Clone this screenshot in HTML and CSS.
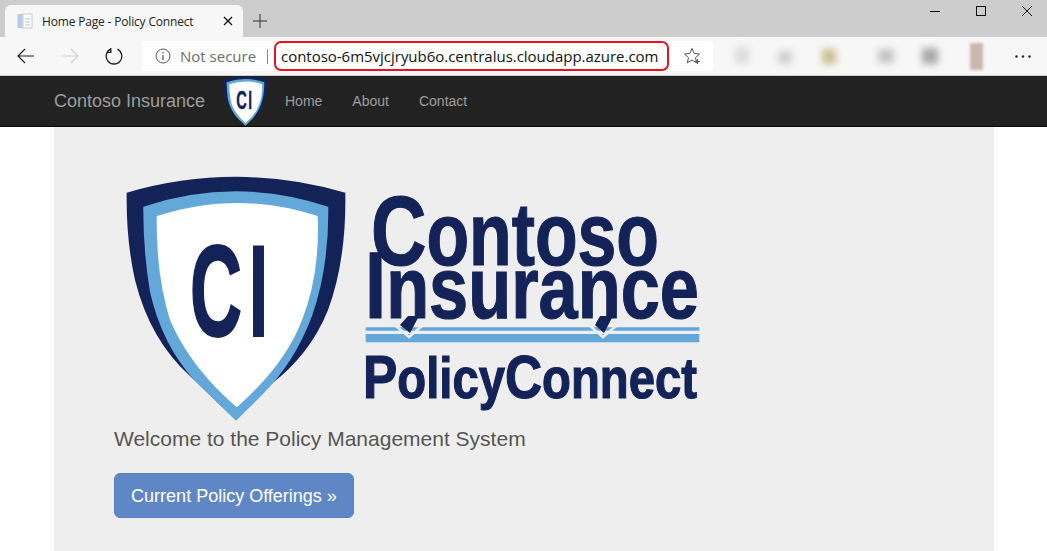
FILE: index.html
```html
<!DOCTYPE html>
<html lang="en">
<head>
<meta charset="utf-8">
<title>Home Page - Policy Connect</title>
<link rel="stylesheet" href="styles.css">
</head>
<body>
<header class="chrome">
  <div class="tabstrip">
    <div class="tab">
      <svg class="favicon" viewBox="0 0 16 16" width="16" height="16"><rect x="0.5" y="1" width="5" height="14" fill="#b5cbe8"/><rect x="6" y="1" width="9" height="14" fill="#fff" stroke="#c9c9c9"/><path d="M8 6h5M8 9h5M8 12h5" stroke="#bdbdbd"/></svg>
      <span class="tab-title">Home Page - Policy Connect</span>
      <svg class="tab-close" viewBox="0 0 10 10" width="10" height="10"><path d="M1 1l8 8M9 1l-8 8" stroke="#111" stroke-width="1.3"/></svg>
    </div>
    <svg class="new-tab" viewBox="0 0 14 14" width="14" height="14"><path d="M7 0v14M0 7h14" stroke="#333" stroke-width="1"/></svg>
    <div class="win-controls">
      <svg viewBox="0 0 10 10" width="10" height="10"><path d="M0 5.500h10" stroke="#111" stroke-width="1"/></svg>
      <svg viewBox="0 0 10 10" width="10" height="10"><rect x="0.5" y="0.5" width="9" height="9" fill="none" stroke="#111"/></svg>
      <svg viewBox="0 0 10 10" width="10" height="10"><path d="M0 0l10 10M10 0l-10 10" stroke="#111"/></svg>
    </div>
  </div>
  <div class="toolbar">
    <div class="nav-buttons">
      <svg viewBox="0 0 18 16" width="18" height="16"><path d="M17 8H1.500M8 1L1 8l7 7" fill="none" stroke="#222" stroke-width="1.2"/></svg>
      <svg viewBox="0 0 18 16" width="18" height="16"><path d="M1 8h15.500M10 1l7 7-7 7" fill="none" stroke="#cfcfcf" stroke-width="1.2"/></svg>
      <svg viewBox="0 0 18 18" width="18" height="18"><path d="M5.600 2.200A7.800 7.800 0 1 0 12.400 2.200M5.800 1v4.300H1.600" fill="none" stroke="#222" stroke-width="1.3"/></svg>
    </div>
    <div class="addressbar">
      <svg class="info" viewBox="0 0 16 16" width="16" height="16"><circle cx="8" cy="8" r="7" fill="none" stroke="#555"/><path d="M8 7v5M8 4v1.600" stroke="#555" stroke-width="1.2"/></svg>
      <span class="not-secure">Not secure</span>
      <span class="sep"></span>
      <span class="url">contoso-6m5vjcjryub6o.centralus.cloudapp.azure.com</span>
      <svg class="star" viewBox="0 0 18 18" width="18" height="18"><path d="M9 1.500l2.200 5 5.300.5-4 3.600 1.200 5.300L9 13l-4.700 2.900 1.200-5.300-4-3.600 5.300-.5z" fill="none" stroke="#555"/><path d="M14.500 12v5M12 14.500h5" stroke="#555"/></svg>
    </div>
    <div class="extensions">
      <span class="blur blur-a"></span>
      <span class="blur blur-b"></span>
      <span class="blur blur-c"></span>
      <span class="blur blur-d"></span>
      <span class="blur blur-e"></span>
      <span class="blur blur-f"></span>
    </div>
    <svg class="more" viewBox="0 0 16 3" width="16" height="3"><circle cx="1.500" cy="1.500" r="1.200" fill="#222"/><circle cx="8" cy="1.500" r="1.200" fill="#222"/><circle cx="14.500" cy="1.500" r="1.200" fill="#222"/></svg>
  </div>
</header>

<nav class="navbar">
  <a class="brand">Contoso Insurance</a>
  <svg class="nav-logo" viewBox="0 0 45 50" width="45" height="50" role="img" aria-label="Contoso Insurance shield">
    <defs>
      <symbol id="shield" viewBox="126 176 220 246">
        <path d="M126.700 192.700Q236 161 345.300 192.700Q346.500 260 328 310Q310 355 270 385L236 420L190 376Q150 340 135 280Q126 240 126.700 192.700Z" fill="#132257"/>
        <path d="M143.300 206.700Q236 176 328.300 206.700Q329 268 312 316Q295 362 262 395L236 420.700L195 381Q162 345 150 292Q143 250 143.300 206.700Z" fill="#63a8d8"/>
        <path d="M156.700 216Q236 190 317.700 216Q320 275 302 320Q285 365 236.700 407.300Q190 367 170 320Q156 275 156.700 216Z" fill="#fff"/>
        <text class="logo-ci" y="336"><tspan x="190" textLength="52" lengthAdjust="spacingAndGlyphs">C</tspan><tspan x="249" textLength="19" lengthAdjust="spacingAndGlyphs">I</tspan></text>
      </symbol>
    </defs>
    <use href="#shield" width="45" height="50"/>
  </svg>
  <ul class="nav-links">
    <li>Home</li>
    <li>About</li>
    <li>Contact</li>
  </ul>
</nav>

<main class="page">
  <section class="jumbotron">
    <svg class="logo" viewBox="114 170 600 256" width="600" height="256" role="img" aria-label="Contoso Insurance PolicyConnect logo">
      <use href="#shield" x="126" y="176" width="220" height="246"/>
      <text class="logo-word" x="371" y="265" textLength="288" lengthAdjust="spacingAndGlyphs" font-size="89"><tspan font-size="98">C</tspan>ontoso</text>
      <text class="logo-word" x="365" y="318" textLength="334" lengthAdjust="spacingAndGlyphs" font-size="87"><tspan font-size="94">I</tspan>nsurance</text>
      <path d="M365.700 327.300H699.300V330.700H365.700ZM365.700 334H699.300V342.300H365.700Z" fill="#63a8d8"/>
      <path d="M396 326L409 337L422 326M590 326L603 337L616 326" fill="none" stroke="#eee" stroke-width="2.500"/>
      <path d="M408 316L419 316L410 333L400 325Z M600 316L613 316L604 333L595 325Z" fill="#132257"/>
      <text class="logo-word" x="363" y="398" textLength="334" lengthAdjust="spacingAndGlyphs" font-size="57"><tspan font-size="62">P</tspan>olicy<tspan font-size="62">C</tspan>onnect</text>
    </svg>
    <p class="lead">Welcome to the Policy Management System</p>
    <a class="btn">Current Policy Offerings »</a>
  </section>
</main>
</body>
</html>
```

FILE: styles.css
```css
* { box-sizing: border-box; }
html, body { margin: 0; height: 551px; overflow: hidden; background: #fff; }
body { font-family: "Liberation Sans", Arial, sans-serif; color: #333; }

.chrome { height: 76px; background: #cdcdcd; }
.tabstrip { height: 37px; display: flex; align-items: flex-end; padding-left: 5px; }
.tab { width: 238px; height: 32px; background: #f7f7f7; border-radius: 6px 6px 0 0; display: flex; align-items: center; padding: 0 10px 0 12px; }
.favicon { flex: none; }
.tab-title { margin-left: 9px; font: 12px "Open Sans", "Noto Sans", sans-serif; color: #222; letter-spacing: -0.17px; white-space: nowrap; }
.tab-close { margin-left: auto; }
.new-tab { margin: 0 0 9px 10px; }
.win-controls { margin-left: auto; align-self: flex-start; display: flex; gap: 36px; padding: 6px 15px 0 0; }

.toolbar { height: 39px; background: #f7f7f7; border-bottom: 1px solid #d0d0d0; display: flex; align-items: center; padding-left: 17px; }
.nav-buttons { display: flex; align-items: center; gap: 26px; width: 125px; }
.addressbar { width: 571px; height: 30px; background: #fff; border-radius: 4px; display: flex; align-items: center; padding-left: 13px; }
.not-secure { width: 87px; margin-left: 9px; font: 15px "Open Sans", sans-serif; color: #6b6b6b; white-space: nowrap; }
.sep { width: 1px; height: 15px; background: #888; margin-right: 6px; }
.url { width: 395px; height: 30px; border: 2px solid #e81123; border-radius: 7px; padding-left: 5px; font: 15px/26px "Open Sans", sans-serif; color: #111; letter-spacing: -0.02px; white-space: nowrap; overflow: hidden; }
.star { margin-left: 14px; }
.extensions { display: flex; align-items: center; margin-left: 21px; width: 278px; height: 30px; }
.blur { display: block; filter: blur(3.500px); flex: none; }
.blur-a { width: 14px; height: 16px; background: #dcdcdc; margin-left: 1px; margin-top: -2px; }
.blur-b { width: 14px; height: 13px; background: #cfcfcf; margin-left: 29px; margin-top: 3px; }
.blur-c { width: 14px; height: 15px; background: #cdbf90; margin-left: 30px; }
.blur-d { width: 16px; height: 14px; background: #c6c6c6; margin-left: 42px; }
.blur-e { width: 16px; height: 16px; background: #a8a8a8; margin-left: 28px; }
.blur-f { width: 13px; height: 27px; background: #cbb7b0; margin-left: 32px; filter: blur(1.500px); }
.more { margin-left: 3px; flex: none; }

.navbar { height: 51px; background: #222; border-bottom: 1px solid #080808; display: flex; align-items: center; padding-left: 54px; }
.brand { font-size: 18px; color: #9d9d9d; width: 168.500px; }
.nav-logo { flex: none; }
.nav-links { list-style: none; display: flex; margin: 0; padding: 0 0 0 2.500px; }
.nav-links li { font-size: 14px; color: #9d9d9d; padding: 0 15px; }

.page { padding-left: 54px; }
.jumbotron { width: 940px; height: 424px; background: #eee; padding: 43px 60px 0; }
.logo { display: block; overflow: visible; }
.logo-ci { font: 700 130px "Liberation Sans Narrow", "Liberation Sans", sans-serif; fill: #132257; stroke: #132257; stroke-width: 2px; }
.logo-word { font-family: "Liberation Sans Narrow", "Liberation Sans", sans-serif; font-weight: 700; fill: #132257; stroke: #132257; stroke-width: 1.200px; }
.lead { margin: 0 0 21px; font-size: 21px; line-height: 26px; font-weight: 400; color: #555; }
.btn { display: inline-block; width: 240px; height: 45px; background: #5f87c5; border: 1px solid #5a80bd; border-radius: 6px; color: #fff; font-size: 18px; line-height: 45px; text-align: center; }
```
